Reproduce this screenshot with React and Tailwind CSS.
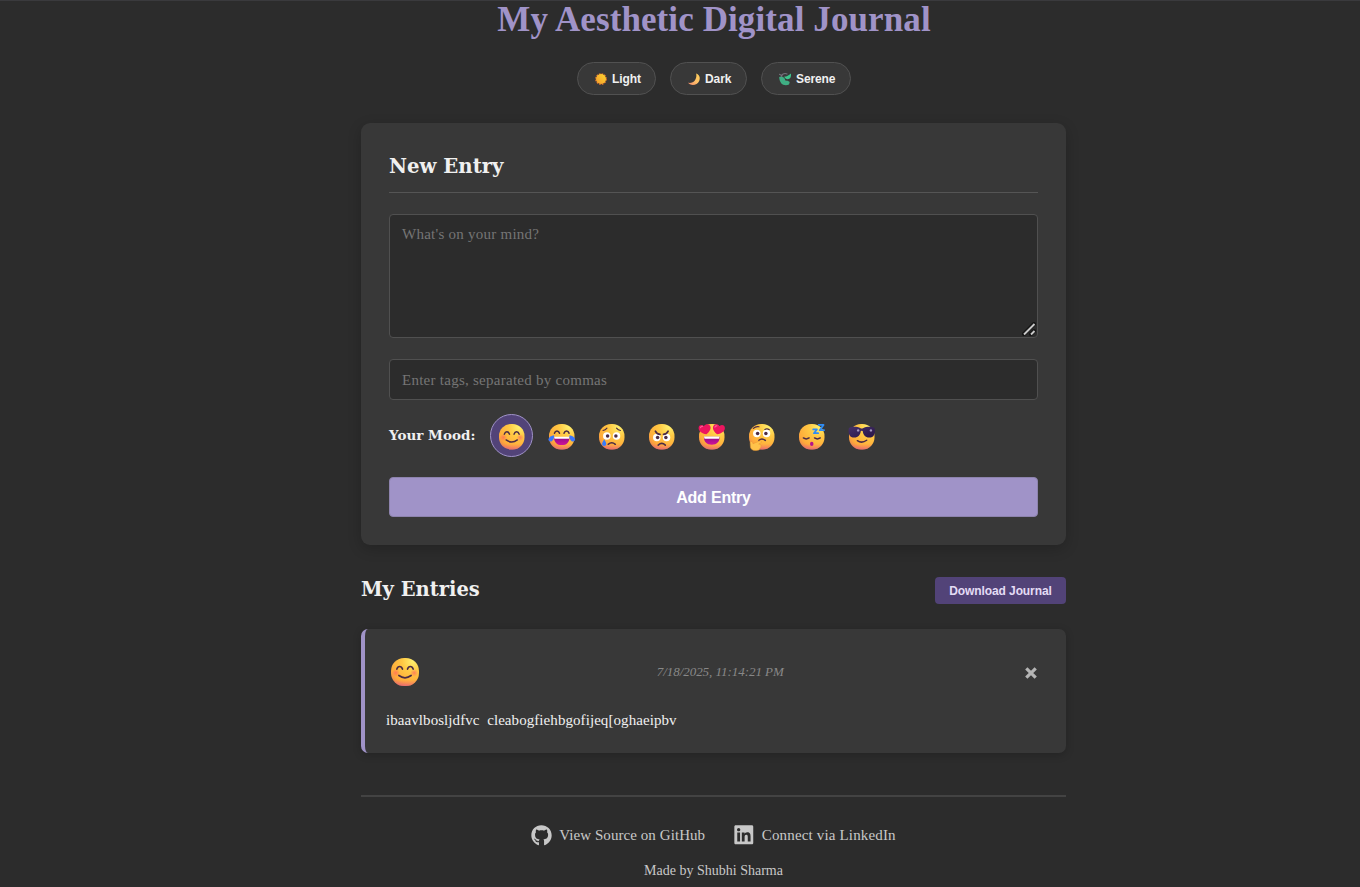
import React from "react";
import { FaGithub, FaLinkedin } from "react-icons/fa";

const INK = "#4b2b45";

function FaceGradients() {
  return (
    <svg width="0" height="0" className="absolute" aria-hidden="true">
      <defs>
        <radialGradient id="skin" cx="0.78" cy="0.12" r="1.08">
          <stop offset="0" stopColor="#fff06e" />
          <stop offset="0.35" stopColor="#ffc944" />
          <stop offset="0.75" stopColor="#ffab3a" />
          <stop offset="1" stopColor="#e67a55" />
        </radialGradient>
        <linearGradient id="chin" x1="0" y1="0" x2="0" y2="1">
          <stop offset="0.78" stopColor="#f0588a" stopOpacity="0" />
          <stop offset="1" stopColor="#e0508e" stopOpacity="0.6" />
        </linearGradient>
        <linearGradient id="mouth" x1="0" y1="0" x2="0" y2="1">
          <stop offset="0" stopColor="#8d0d86" />
          <stop offset="1" stopColor="#d0139a" />
        </linearGradient>
        <linearGradient id="sun" x1="0" y1="1" x2="1" y2="0">
          <stop offset="0" stopColor="#f39a2c" />
          <stop offset="1" stopColor="#ffd62e" />
        </linearGradient>
        <linearGradient id="moon" x1="0" y1="1" x2="1" y2="0">
          <stop offset="0" stopColor="#f0876a" />
          <stop offset="0.5" stopColor="#ffc068" />
          <stop offset="1" stopColor="#ffd257" />
        </linearGradient>
        <radialGradient id="blush">
          <stop offset="0" stopColor="#ff5d63" stopOpacity="0.65" />
          <stop offset="1" stopColor="#ff5d63" stopOpacity="0" />
        </radialGradient>
        <linearGradient id="lens" x1="0" y1="0" x2="1" y2="1">
          <stop offset="0" stopColor="#463269" />
          <stop offset="1" stopColor="#281448" />
        </linearGradient>
      </defs>
    </svg>
  );
}

const line = { fill: "none", stroke: INK, strokeWidth: 1.9, strokeLinecap: "round", strokeLinejoin: "round" };

function Eyes({ y, pupil = 2.2 }) {
  return (
    <>
      <circle cx="9.8" cy={y} r="4.7" fill="#fff" />
      <circle cx="22" cy={y} r="4.7" fill="#fff" />
      <circle cx="10.8" cy={y} r={pupil} fill={INK} />
      <circle cx="21.2" cy={y} r={pupil} fill={INK} />
    </>
  );
}

const features = {
  smile: (
    <>
      <circle cx="5.5" cy="17" r="4.5" fill="url(#blush)" />
      <circle cx="26.5" cy="17" r="4.5" fill="url(#blush)" />
      <path d="M6.700 12.700q.9-3 3.200-3t3.200 3M18.900 12.700q.9-3 3.200-3t3.200 3" {...line} />
      <path d="M9 20q7 5.200 14 0" {...line} />
    </>
  ),
  joy: (
    <>
      <path d="M6.800 11.500q.9-2.800 3.200-2.800t3.200 2.800M18.800 11.500q.9-2.800 3.200-2.800t3.200 2.800" {...line} />
      <path d="M6.400 16.500h19.200c.2 6-3.300 10-9.600 10s-9.800-4-9.600-10z" fill="url(#mouth)" />
      <path d="M6.400 16h19.200l-.6 2.600H7z" fill="#fff" />
      <path d="M6.300 14C3 14.100 0 16.900-.7 18.800c-.5 2.500 2.200 4.100 4.200 2.700 2.400-1.600 3.300-4.800 2.800-7.500zM25.700 14c3.300.1 6.300 2.900 7 4.800.5 2.500-2.200 4.100-4.200 2.700-2.400-1.600-3.300-4.800-2.800-7.500z" fill="#3b76fb" />
    </>
  ),
  cry: (
    <>
      <path d="M5 8.200q3-.4 5-3M27 8.200q-3-.4-5-3" {...line} strokeWidth="1.400" />
      <Eyes y={15} />
      <path d="M11.500 25.500q4.500-4 9 0" {...line} />
      <path d="M6.500 19c-1.600 2.500-2.600 4.300-2.600 6a2.600 2.600 0 0 0 5.200 0c0-1.700-1-3.500-2.600-6z" fill="#377cfb" />
    </>
  ),
  angry: (
    <>
      <Eyes y={17} />
      <path d="M8 9c1.300 2.800 3.400 3.900 5.800 4M24 9c-1.300 2.800-3.400 3.900-5.800 4" {...line} strokeWidth="2.100" />
      <path d="M11.500 26.500q4.500-4.400 9 0" {...line} />
    </>
  ),
  hearts: (
    <>
      <path d="M6.200 16h19.600c.3 6.200-3.400 10-9.800 10s-10.100-3.800-9.800-10z" fill="url(#mouth)" />
      <path d="M6.200 15.800h19.600l-.7 2.800H7z" fill="#fff" />
      <path d="M9.300 13C3.500 11.900-.5 8.800-.5 4.900-.5.900 4 0 6.300 2.700 8-.5 13.200-.7 14.400 3.500c.9 3.500-2 7-5.100 9.500zM22.700 13c5.800-1.100 9.800-4.200 9.800-8.100 0-4-4.500-4.900-6.800-2.200-1.700-3.200-6.900-3.400-8.100.8-.9 3.500 2 7 5.100 9.500z" fill="#ed155f" />
      <path d="M2 4.500q.5-2 2.500-1.600M20 4q.5-2 2.500-1.600" fill="none" stroke="#ff609b" strokeWidth="1.500" strokeLinecap="round" />
    </>
  ),
  think: (
    <>
      <path d="M5.500 5.500q3-3 7-2M20 7q2.500-1.800 5.500.2" {...line} strokeWidth="1.500" />
      <Eyes y={12} />
      <path d="M12.500 20.500q3.500-3.500 8 0" {...line} />
      <path d="M1.500 23.500c.2-1.900 2.800-2 3.100-.2l.4 1.500 8.500-3.600c1.900-.6 2.900 1.500 1.300 2.500l-2.600 1.500c2.800-.2 3.300 1.300 2.500 2.400.8 1.200.2 2.100-.9 2.600-.3 2.300-2 3.100-5.500 3.100-4.500 0-6.700-2.300-6.600-5.800z" fill="#ffc34a" stroke="#eb9a32" strokeWidth=".7" />
    </>
  ),
  sleep: (
    <>
      <path d="M5.500 17.500q3.500 2.400 7.200 0M19.500 17.500q3.500 2.400 7.200 0" {...line} />
      <ellipse cx="16" cy="25" rx="2.200" ry="2.600" fill="#b5128c" />
      <path d="M17.800 6.800h4.700l-3.800 4.800h5.300M24.800 1.200h6l-4.800 6.600h5.400" fill="none" stroke="#2f8df5" strokeWidth="2.200" strokeLinejoin="round" strokeLinecap="round" />
    </>
  ),
  cool: (
    <>
      <path d="M-.3 5.500C2 3 10 3 14.500 5.200q1.500.6 3 0C22 3 30 3 32.300 5.500c1 6.500-1 11.500-7 11.500-4.900 0-7.500-3.300-8.100-8.200q-1.200-.7-2.400 0C14.200 13.700 11.600 17 6.700 17c-6 0-8-5-7-11.500z" fill="url(#lens)" />
      <circle cx="11.500" cy="8" r="1.500" fill="#a69ac2" />
      <circle cx="27.500" cy="8" r="1.500" fill="#a69ac2" />
      <path d="M10.500 21q5.500 3.800 11.700-.6" {...line} />
    </>
  ),
};

function Face({ kind, className }) {
  return (
    <svg viewBox="0 0 32 32" className={className} overflow="visible" role="img" aria-label={kind}>
      <rect width="32" height="32" rx="15" fill="url(#skin)" />
      <rect width="32" height="32" rx="15" fill="url(#chin)" />
      {features[kind]}
    </svg>
  );
}

function Sun() {
  return (
    <svg viewBox="0 0 14 14" className="size-[14px]">
      <circle cx="7" cy="7" r="5.200" fill="none" stroke="#e8742c" strokeWidth="1.300" strokeDasharray="1.700 1.020" />
      <circle cx="7" cy="7" r="5" fill="url(#sun)" />
    </svg>
  );
}

function Moon() {
  return (
    <svg viewBox="0 0 14 14" className="size-[14px]">
      <path d="M9.200 1.600c3.200 1 4.400 4.400 3 7.300-1.600 3.500-5.800 5-9.300 3.400-.9-.4-1.500-.9-1.700-1.500 2.600.5 5.300-.3 6.800-2.600 1.400-2.100 1.600-4.300 1.200-6.600z" fill="url(#moon)" />
    </svg>
  );
}

function Herb() {
  return (
    <svg viewBox="0 0 14 14" className="size-[14px]">
      <path d="M9 2C6.500.8 3 2.300 3.200 5.300c.2 2 2 3.500 5 4M1.500 2.300l2.700 1.600" fill="none" stroke="#77717c" strokeWidth="1.100" strokeLinecap="round" />
      <path d="M12.900 1.500c.6 3.500-.7 5.700-3.200 5.700-1.900 0-3.200-1.100-3.400-2.600C8 4.800 10.700 3.500 12.900 1.500z" fill="#3cc58c" />
      <path d="M1.200 5C4.800 4.200 7.500 6 7.200 8.800c2-.4 3.800 0 4.500 1.400l-.7 2.300C9.200 13.300 6.900 13.300 5.200 12.700 3 11.900 1.200 8.500 1.200 5z" fill="#3fae83" />
    </svg>
  );
}

function ThemeButton({ icon, label, className }) {
  return (
    <button
      className={`flex h-[33px] items-center gap-1 rounded-full border border-[#515151] bg-[#383838] pl-4 font-['Liberation_Sans',Arial,sans-serif] text-[12px] font-bold text-[#f0f0f0] ${className}`}
    >
      {icon}
      <span className="pl-[0.5px] tracking-[-0.1px]">{label}</span>
    </button>
  );
}

const moods = ["smile", "joy", "cry", "angry", "hearts", "think", "sleep", "cool"];

export default function App() {
  return (
    <div className="h-[887px] overflow-hidden border-t border-[#3a3a3d] bg-[#2c2c2c] font-[Georgia,'Liberation_Serif',serif] text-[#f0f0f0]">
      <FaceGradients />
      <main className="ml-[361px] w-[705px]">
        <h1 className="h-[61px] pl-px text-center font-['Liberation_Serif',serif] text-[35px] leading-[38px] font-bold tracking-[0.1px] text-[#a093c8]">
          My Aesthetic Digital Journal
        </h1>
        <div className="flex justify-center gap-[14px]">
          <ThemeButton icon={<Sun />} label="Light" className="w-[79px]" />
          <ThemeButton icon={<Moon />} label="Dark" className="w-[77px]" />
          <ThemeButton icon={<Herb />} label="Serene" className="w-[90px]" />
        </div>

        <section className="mt-[28px] h-[422px] rounded-[9px] bg-[#383838] px-[28px] pt-[28px] shadow-[0_4px_14px_rgba(0,0,0,0.2)]">
          <h2 className="h-[42px] border-b border-[#555555] font-[Georgia,'DejaVu_Serif',serif] text-[19.700px] leading-[32px] font-bold">
            New Entry
          </h2>
          <div className="relative mt-[21px] h-[124px] rounded-[4px] border border-[#505050] bg-[#2c2c2c] px-3 pt-[9px] text-[15px] leading-[20px] tracking-[0.25px] text-[#757575]">
            What's on your mind?
            <svg viewBox="0 0 14 14" className="absolute right-px bottom-px size-[14px]">
              <path d="M2 12 12 2M9 12l3-3" stroke="#151515" strokeWidth="4" strokeLinecap="round" />
              <path d="M2 12.500 12.500 2M9 12.500 12.500 9" stroke="#c8c8c8" strokeWidth="1.900" />
            </svg>
          </div>
          <div className="mt-[21px] flex h-[41px] items-center rounded-[4px] border border-[#505050] bg-[#2c2c2c] px-3 pt-px text-[15px] tracking-[0.26px] text-[#757575]">
            Enter tags, separated by commas
          </div>
          <div className="mt-[14px] flex h-[43px] items-center">
            <span className="w-[101px] font-[Georgia,'DejaVu_Serif',serif] text-[13.500px] font-bold whitespace-nowrap">
              Your Mood:
            </span>
            <div className="flex gap-[7px]">
              {moods.map((kind, index) => (
                <button
                  key={kind}
                  aria-label={kind}
                  className={`flex size-[43px] items-center justify-center rounded-full border pt-[3px] ${
                    index === 0 ? "border-[#a093c8] bg-[#524378]" : "border-transparent"
                  }`}
                >
                  <Face kind={kind} className="size-[25.5px]" />
                </button>
              ))}
            </div>
          </div>
          <button className="mt-[20px] h-[40px] w-full rounded-[4px] border border-[#8d83ad] bg-[#a093c8] pt-px font-['Liberation_Sans',Arial,sans-serif] text-[16px] leading-[38px] font-bold tracking-[-0.2px] text-white">
            Add Entry
          </button>
        </section>

        <div className="mt-[32px] flex h-[27px] items-center justify-between">
          <h2 className="pb-px font-[Georgia,'DejaVu_Serif',serif] text-[19.500px] font-bold">My Entries</h2>
          <button className="h-[27px] w-[131px] rounded-[4px] bg-[#524378] pt-px font-['Liberation_Sans',Arial,sans-serif] text-[12px] font-bold tracking-[-0.1px] text-[#e4dcf5]">
            Download Journal
          </button>
        </div>

        <article className="mt-[25px] h-[124px] rounded-[7px] border-l-[4px] border-[#a093c8] bg-[#383838] pr-[29px] pl-[21px] pt-[28px] shadow-[0_2px_9px_rgba(0,0,0,0.2)]">
          <div className="flex h-[30px] items-center justify-between">
            <Face kind="smile" className="ml-[5px] size-[28px]" />
            <time className="pr-[3px] text-[13px] tracking-[-0.04px] text-[#888888] italic">7/18/2025, 11:14:21 PM</time>
            <svg viewBox="0 0 12 12" className="mt-px mr-[0.5px] size-[12px]">
              <path d="M1.300 1.300 10.700 10.700M10.700 1.300 1.300 10.700" stroke="#b5b5b5" strokeWidth="3.200" />
            </svg>
          </div>
          <p className="mt-[23px] text-[15px] leading-[20px] tracking-[0.07px] whitespace-pre text-[#f0f0f0]">
            {"ibaavlbosljdfvc  cleabogfiehbgofijeq[oghaeipbv"}
          </p>
        </article>

        <footer className="mt-[42px] border-t-2 border-[#434343] pt-[27px] text-[15px] text-[#c8c8c8]">
          <div className="flex h-[22px] items-center justify-center gap-[28px]">
            <a className="flex items-center gap-[7px]">
              <FaGithub size={21} />
              <span className="tracking-[0.07px]">View Source on GitHub</span>
            </a>
            <a className="flex items-center gap-[7px]">
              <FaLinkedin size={21.600} />
              <span className="tracking-[0.16px]">Connect via LinkedIn</span>
            </a>
          </div>
          <p className="mt-[15px] text-center text-[14px] leading-[20px]">Made by Shubhi Sharma</p>
        </footer>
      </main>
    </div>
  );
}
